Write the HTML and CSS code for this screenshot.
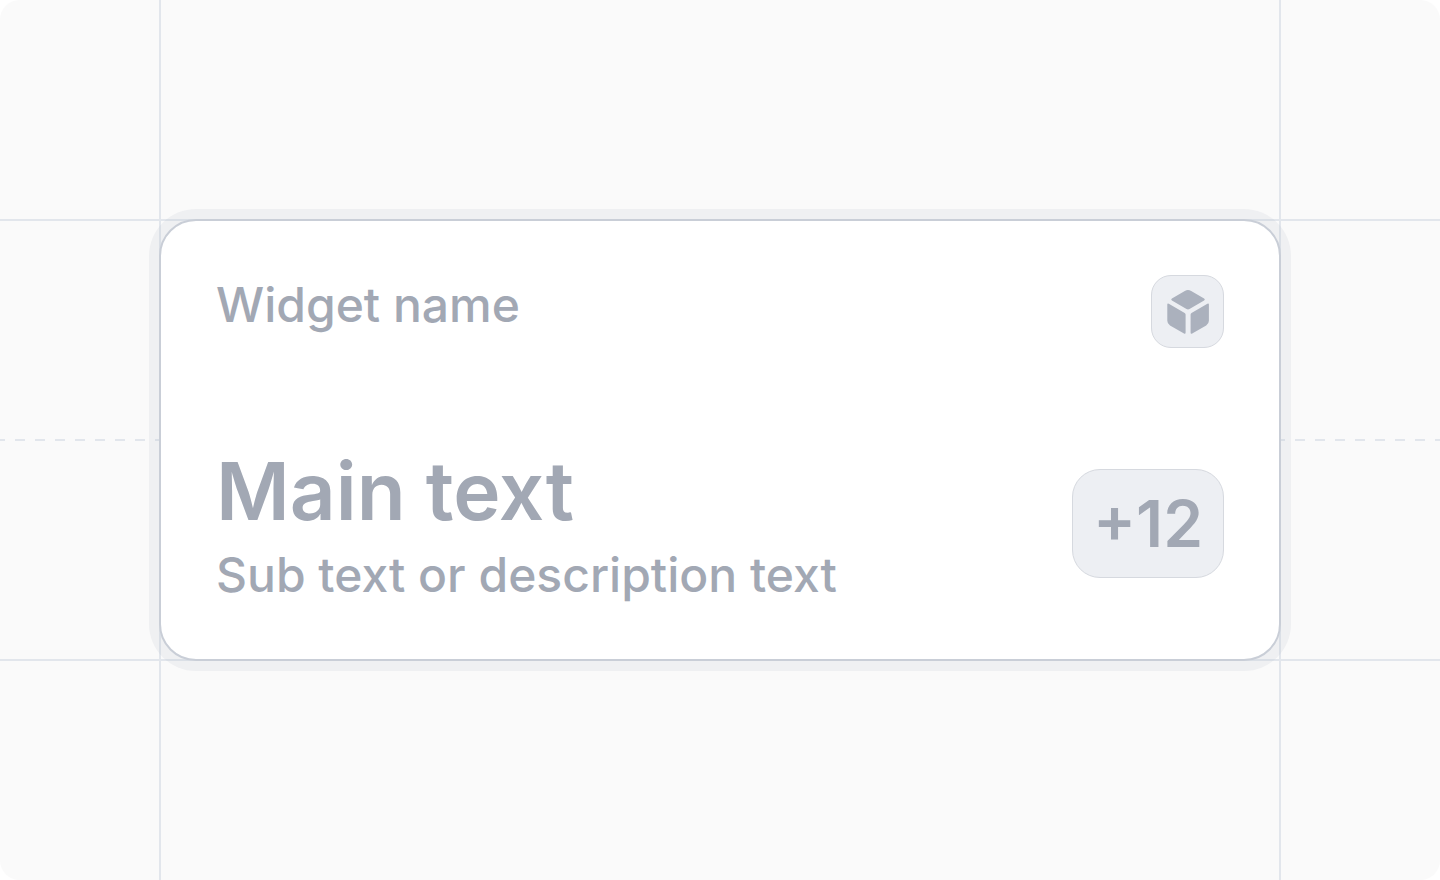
FILE: index.html
```html
<!DOCTYPE html>
<html lang="en">
<head>
    <meta charset="UTF-8">
    <meta name="viewport" content="width=device-width, initial-scale=1.0">
    <title>Widget</title>
    <link rel="stylesheet" href="styles.css">
</head>
<body>
    <main class="canvas">
        <article class="widget">
            <header class="widget-header">
                <h2 class="widget-name">Widget name</h2>
                <span class="widget-icon">
                    <svg viewBox="0 0 48 48" fill="currentColor" aria-hidden="true">
                        <path d="M20.8 3Q24 1.2 27.2 3L40.1 10.6Q41.6 11.5 40.1 12.4L25.5 21.1Q24 22 22.5 21.1L7.9 12.4Q6.4 11.5 7.9 10.6Z"/>
                        <path d="M3.3 16.6Q3.3 14.9 4.8 15.7L20.7 25Q21.6 25.5 21.6 26.5V44.5Q21.6 46.4 20 45.5L6 37.5Q3.3 35.8 3.3 32.8Z"/>
                        <path d="M44.9 16.6Q44.9 14.9 43.4 15.7L27.5 25Q26.6 25.5 26.6 26.5V44.5Q26.6 46.4 28.2 45.5L42.2 37.5Q44.9 35.8 44.9 32.8Z"/>
                    </svg>
                </span>
            </header>
            <div class="widget-body">
                <div class="widget-text">
                    <p class="main-text">Main text</p>
                    <p class="sub-text">Sub text or description text</p>
                </div>
                <span class="badge">+12</span>
            </div>
        </article>
    </main>
</body>
</html>
```
FILE: styles.css
```css
* {
    box-sizing: border-box;
}

body {
    margin: 0;
    background-color: #fff;
    color: #a2a8b4;
    font-family: Inter, "Liberation Sans", sans-serif;
}

h2,
p {
    margin: 0;
}

/* guide lines follow the 1:7:1 columns and 1:2:1 rows of the grid */
.canvas {
    --guide: #e2e6ec;
    --column: calc(100% / 9);
    display: grid;
    grid-template-columns: 1fr 7fr 1fr;
    grid-template-rows: 1fr 2fr 1fr;
    min-height: 100vh;
    border-radius: 20px;
    background-color: #fafafa;
    background-image:
        linear-gradient(90deg,
            transparent calc(var(--column) - 1px),
            var(--guide) calc(var(--column) - 1px) calc(var(--column) + 1px),
            transparent calc(var(--column) + 1px) calc(100% - var(--column) - 1px),
            var(--guide) calc(100% - var(--column) - 1px) calc(100% - var(--column) + 1px),
            transparent calc(100% - var(--column) + 1px)),
        linear-gradient(
            transparent calc(25% - 1px),
            var(--guide) calc(25% - 1px) calc(25% + 1px),
            transparent calc(25% + 1px) calc(75% - 1px),
            var(--guide) calc(75% - 1px) calc(75% + 1px),
            transparent calc(75% + 1px)),
        repeating-linear-gradient(90deg,
            var(--guide) 0 5px,
            transparent 5px 15px,
            var(--guide) 15px 20px);
    background-size: 100% 100%, 100% 100%, 100% 2px;
    background-position: 0 0, 0 0, 0 50%;
    background-repeat: no-repeat;
}

.widget {
    grid-column: 2;
    grid-row: 2;
    display: flex;
    flex-direction: column;
    justify-content: space-between;
    margin: -1px;
    padding: 54px 55px;
    border: 2px solid #c9ced7;
    border-radius: 37px;
    background-color: #fff;
    background-clip: padding-box;
    box-shadow: 0 0 0 10px rgba(162, 174, 186, 0.12);
}

.widget-header,
.widget-body {
    display: flex;
    justify-content: space-between;
    gap: 32px;
}

.widget-header {
    align-items: flex-start;
}

.widget-body {
    align-items: center;
}

.widget-name,
.sub-text {
    font-size: 48px;
    font-weight: 500;
    line-height: 60px;
}

.widget-text {
    display: flex;
    flex-direction: column;
    gap: 4px;
}

.main-text {
    font-size: 80px;
    font-weight: 600;
    line-height: 100px;
}

.widget-icon,
.badge {
    display: flex;
    flex-shrink: 0;
    align-items: center;
    justify-content: center;
    border: 1px solid #d6d9df;
    background-color: #edeff3;
}

.widget-icon {
    width: 73px;
    height: 73px;
    border-radius: 20px;
    color: #abb1bd;
}

.widget-icon svg {
    width: 48px;
    height: 48px;
}

.badge {
    padding: 0 20px;
    border-radius: 28px;
    font-size: 64px;
    font-weight: 600;
    line-height: 107px;
}
```
